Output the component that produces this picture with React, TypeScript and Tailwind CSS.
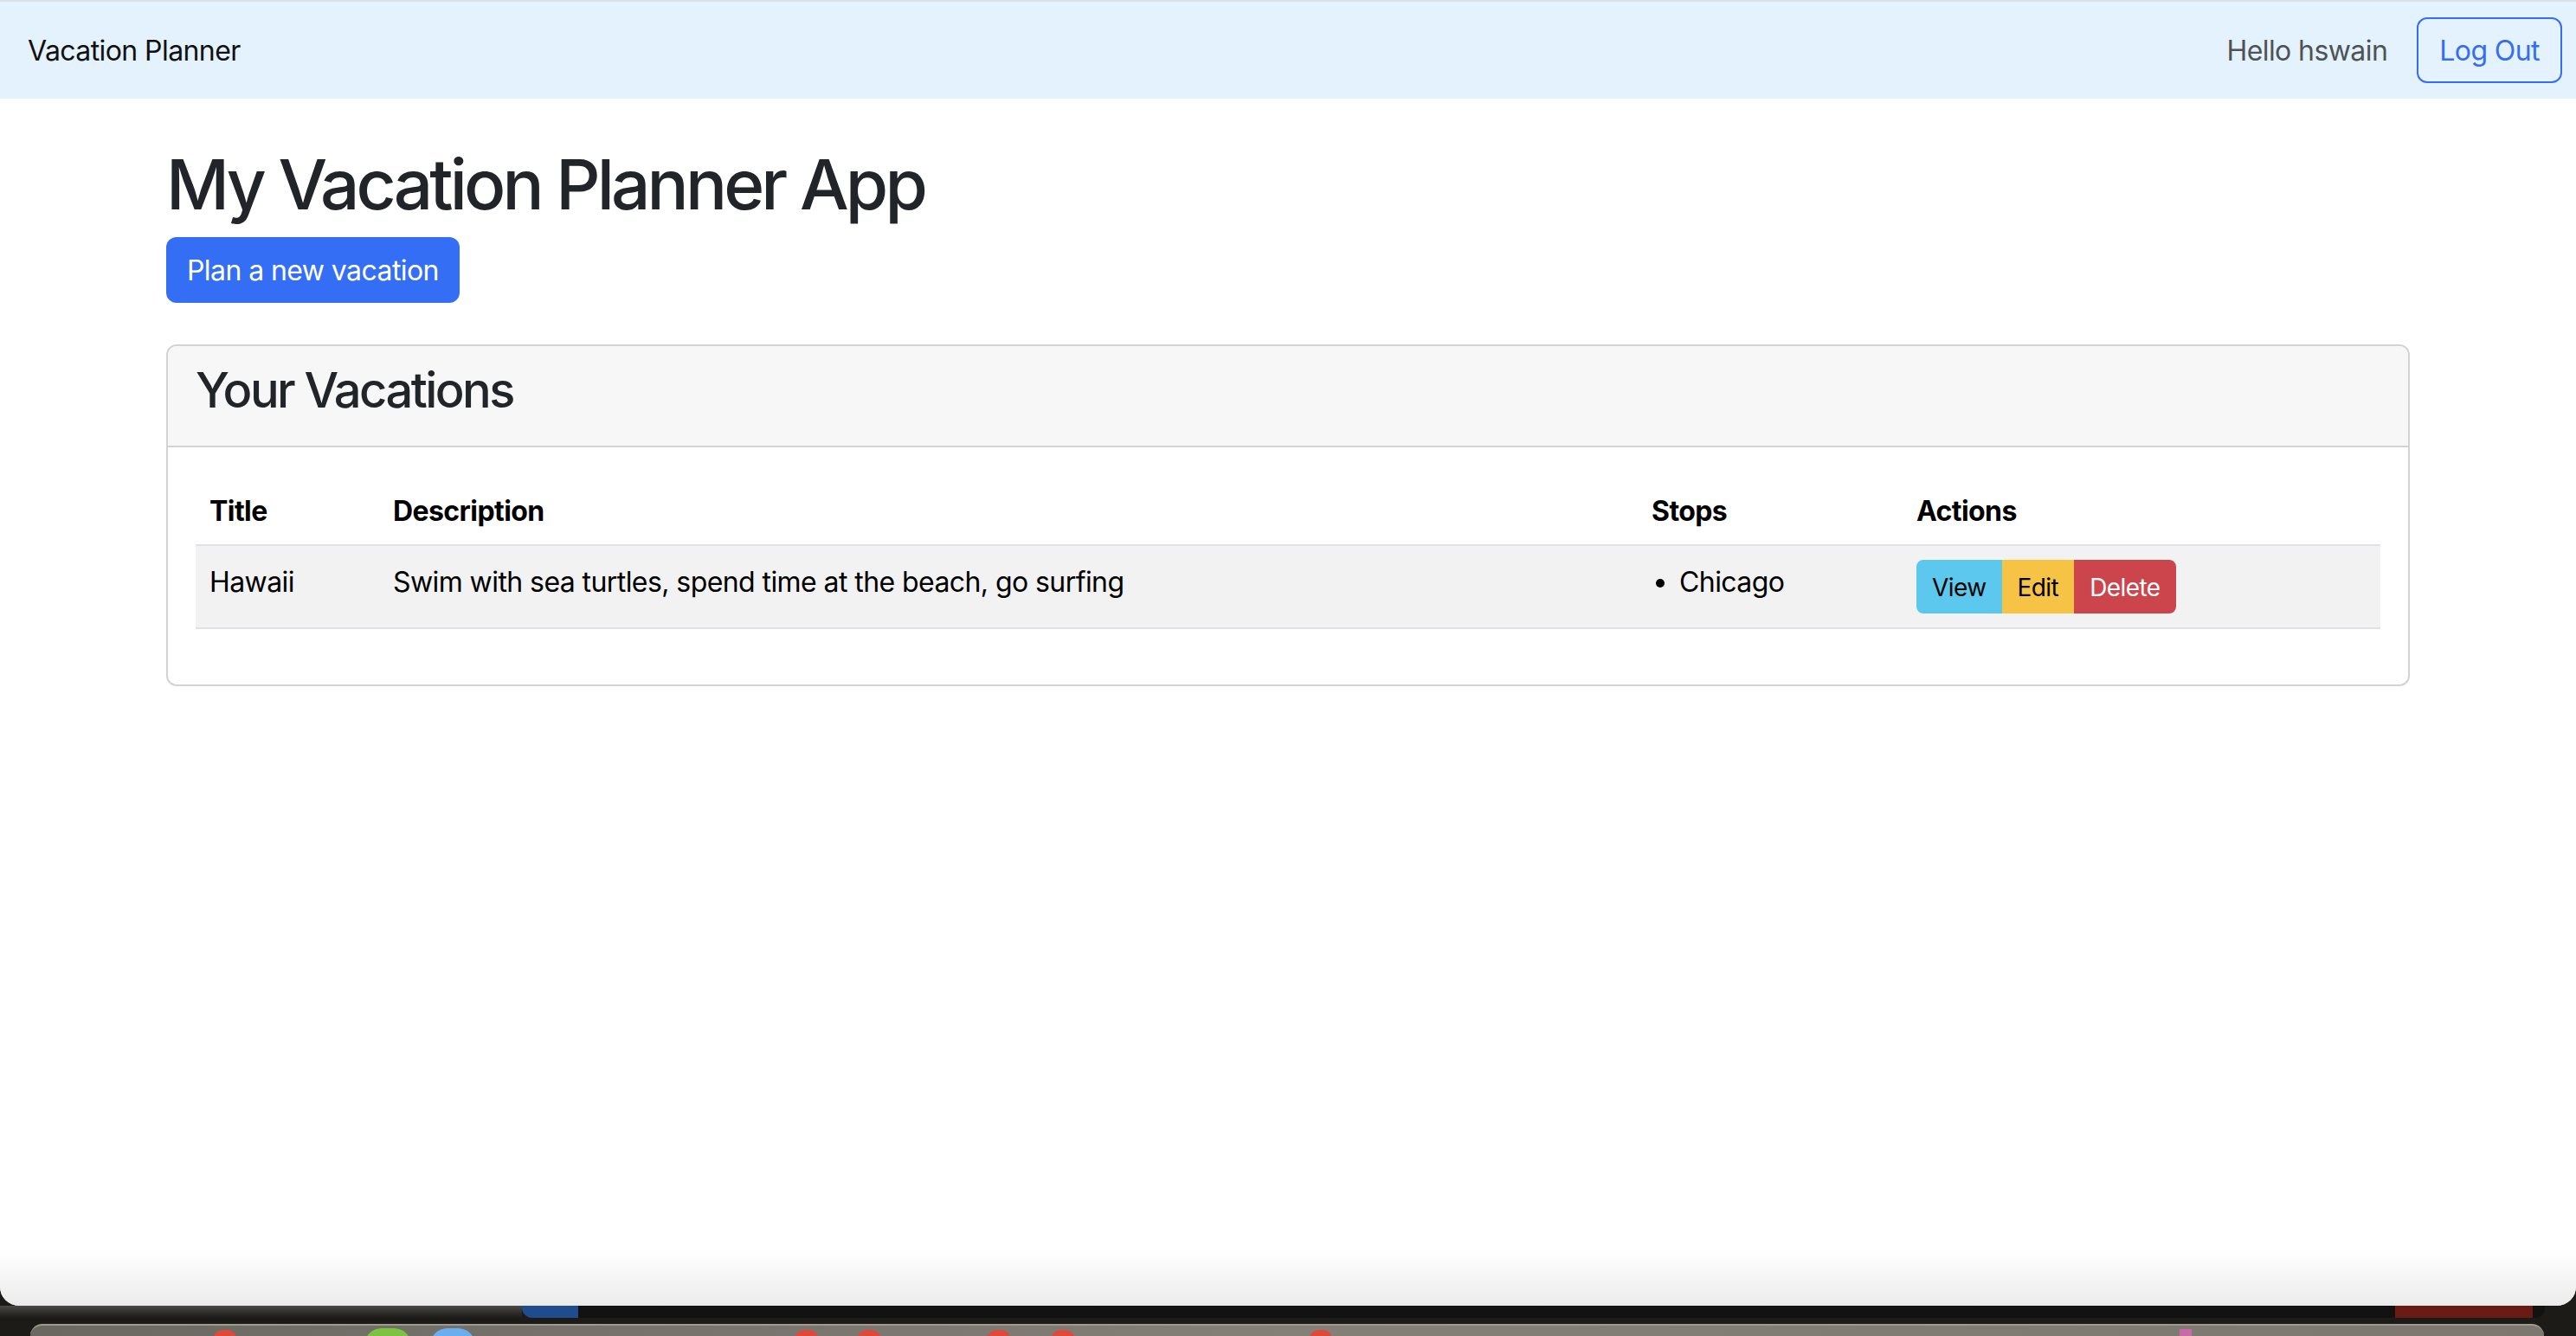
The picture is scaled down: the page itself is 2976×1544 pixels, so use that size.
import React from "react";

function Navbar() {
  return (
    <div className="h-[112px] bg-[#e3f2fd] flex items-center justify-between pl-[32px] pr-[16px] shrink-0">
      <div className="text-[32px] leading-[48px] pt-[2px] text-[#111]">Vacation Planner</div>
      <div className="flex items-center gap-[34px]">
        <span className="text-[32px] leading-[48px] pt-[2px] text-[#4f5256]">Hello hswain</span>
        <button className="h-[76px] px-[24px] pt-[2px] border-2 border-[#346ef4] rounded-[12px] text-[32px] leading-[48px] text-[#346ef4] bg-transparent">
          Log Out
        </button>
      </div>
    </div>
  );
}

function VacationTable() {
  return (
    <table className="w-full table-fixed border-collapse text-[32px] leading-[48px] text-black">
      <colgroup>
        <col className="w-[212px]" />
        <col className="w-[1454px]" />
        <col className="w-[306px]" />
        <col />
      </colgroup>
      <thead>
        <tr className="border-b-2 border-[#dee2e6]">
          <th className="text-left font-bold px-[16px] pt-[18px] pb-[14px]">Title</th>
          <th className="text-left font-bold px-[16px] pt-[18px] pb-[14px]">Description</th>
          <th className="text-left font-bold px-[16px] pt-[18px] pb-[14px]">Stops</th>
          <th className="text-left font-bold px-[16px] pt-[18px] pb-[14px]">Actions</th>
        </tr>
      </thead>
      <tbody>
        <tr className="bg-[#f2f2f2] border-b-2 border-[#dee2e6]">
          <td className="align-top px-[16px] pt-[18px] pb-[14px]">Hawaii</td>
          <td className="align-top px-[16px] pt-[18px] pb-[14px]">
            Swim with sea turtles, spend time at the beach, go surfing
          </td>
          <td className="align-top px-[16px] pt-[18px] pb-[14px]">
            <ul className="list-disc pl-[32px] m-0">
              <li>Chicago</li>
            </ul>
          </td>
          <td className="align-top px-[16px] py-[16px]">
            <div className="inline-flex">
              <button className="h-[62px] px-[16px] pt-[2px] border-2 border-[#5dc8ed] bg-[#5dc8ed] rounded-l-[8px] text-[28px] leading-[40px] text-black">
                View
              </button>
              <button className="h-[62px] px-[16px] pt-[2px] border-2 border-[#f6c344] bg-[#f6c344] text-[28px] leading-[40px] text-black">
                Edit
              </button>
              <button className="h-[62px] px-[16px] pt-[2px] border-2 border-[#cd454c] bg-[#cd454c] rounded-r-[8px] text-[28px] leading-[40px] text-white">
                Delete
              </button>
            </div>
          </td>
        </tr>
      </tbody>
    </table>
  );
}

function BottomStrip() {
  return (
    <div className="h-[35px] shrink-0 flex flex-col bg-[#1c1b17]">
      <div className="h-[14px] flex">
        <div className="w-[603px] bg-gradient-to-b from-[#4a4a48] to-[#1c1b17]" />
        <div className="w-[65px] bg-[#1f4c8c] rounded-bl-[12px]" />
        <div className="w-[2099px] bg-[#121212]" />
        <div className="w-[159px] bg-[#6b1b13]" />
        <div className="w-[14px] bg-[#121212] rounded-br-[10px]" />
      </div>
      <div className="h-[7px]" />
      <div className="relative h-[14px] ml-[35px] w-[2904px] rounded-t-[22px] border-t-2 border-[#9e9a91] bg-gradient-to-r from-[#6b6862] via-[#847f77] to-[#7c786f] overflow-hidden">
        <div className="absolute left-[212px] top-[5px] w-[26px] h-[20px] rounded-full bg-[#e0483a]" />
        <div className="absolute left-[386px] top-[3px] w-[54px] h-[40px] rounded-full bg-[#7cc43f]" />
        <div className="absolute left-[462px] top-[3px] w-[52px] h-[40px] rounded-full bg-[#6aaef0]" />
        <div className="absolute left-[884px] top-[5px] w-[26px] h-[20px] rounded-full bg-[#e0483a]" />
        <div className="absolute left-[956px] top-[5px] w-[26px] h-[20px] rounded-full bg-[#e0483a]" />
        <div className="absolute left-[1106px] top-[5px] w-[26px] h-[20px] rounded-full bg-[#e0483a]" />
        <div className="absolute left-[1180px] top-[5px] w-[26px] h-[20px] rounded-full bg-[#e0483a]" />
        <div className="absolute left-[1478px] top-[5px] w-[26px] h-[20px] rounded-full bg-[#e0483a]" />
        <div className="absolute left-[2483px] top-[4px] w-[14px] h-[14px] bg-[#c86aa8]" />
      </div>
    </div>
  );
}

export default function App() {
  return (
    <div className="w-[2976px] h-[1544px] flex flex-col overflow-hidden bg-[#1c1b17] font-[Inter,sans-serif] tracking-[-0.036em]">
      <div className="flex-1 flex flex-col bg-white rounded-b-[22px] overflow-hidden border-t-2 border-[#dde1e5]">
        <Navbar />
        <main className="ml-[192px] w-[2592px] pt-[48px]">
          <h1 className="text-[80px] leading-[96px] pt-[3px] pb-0 font-medium tracking-[-0.048em] text-[#212529] mb-[13px]">
            My Vacation Planner App
          </h1>
          <button className="h-[76px] px-[24px] pt-[2px] rounded-[12px] bg-[#346ef4] text-white text-[32px] leading-[48px]">
            Plan a new vacation
          </button>
          <div className="mt-[48px] border-2 border-[#d3d3d3] rounded-[12px] overflow-hidden">
            <div className="bg-[#f7f7f7] border-b-2 border-[#d3d3d3] px-[32px] pt-[18px] pb-[14px]">
              <h3 className="text-[56px] leading-[67px] font-medium tracking-[-0.045em] text-[#212529] mb-[16px]">Your Vacations</h3>
            </div>
            <div className="px-[32px] pt-[32px] pb-[64px]">
              <VacationTable />
            </div>
          </div>
        </main>
        <div className="mt-auto h-[64px] bg-gradient-to-b from-white to-[#ebebeb]" />
      </div>
      <BottomStrip />
    </div>
  );
}
